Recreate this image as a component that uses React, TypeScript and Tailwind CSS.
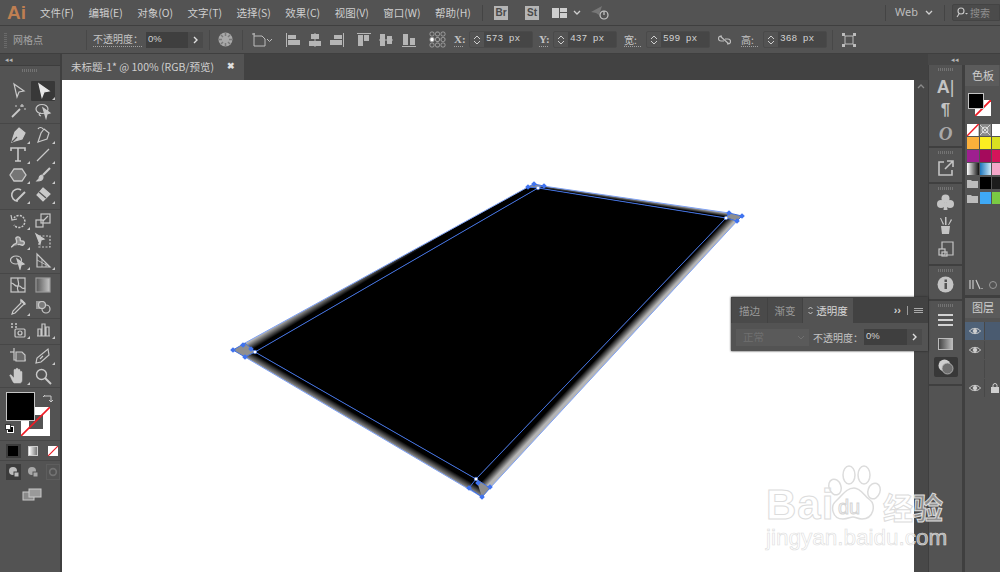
import React from "react";

const Grip = ({ w = "w-[16px]" }: { w?: string }) => (
  <div className={`${w} h-[3px] mx-auto bg-[repeating-linear-gradient(90deg,#737373_0_1px,transparent_1px_2px)]`} />
);

const Svg = ({ s = 18, children, c = "" }: { s?: number; children: React.ReactNode; c?: string }) => (
  <svg width={s} height={s} viewBox="0 0 18 18" fill="none" stroke="#c9c9c9" strokeWidth="1.2" className={`shrink-0 ${c}`}>
    {children}
  </svg>
);

const F = "#c9c9c9";

const Tool = ({ corner, active, children }: { corner?: boolean; active?: boolean; children: React.ReactNode }) => (
  <div className={`relative w-[24px] h-[20px] flex items-center justify-center rounded-[1px] ${active ? "bg-[#383838]" : ""}`}>
    {children}
    {corner && <span className="absolute right-[0px] bottom-[1px] w-0 h-0 border-l-[3px] border-l-transparent border-b-[3px] border-b-[#c9c9c9]" />}
  </div>
);

const toolGroups: { h: string; row: string; rows: [React.ReactNode, React.ReactNode, boolean?, boolean?][] }[] = [
  {
    h: "h-[44px]",
    row: "h-[20px]",
    rows: [
      [<path d="M5 2l10 7-5 1-2 5z" />, <path d="M5 2l10 7-5 1-2 5z" fill="#e8e8e8" stroke="#e8e8e8" />, false, true],
      [<><path d="M3 15L11 7" strokeWidth="1.8" /><path d="M13 2v3M11 4h4M15 7h2M6 4h2" /></>, <><ellipse cx="8" cy="7" rx="6" ry="4.5" /><path d="M7 14c-3-1-2-3 0-3" /><path d="M9 6l7 5-3 1-1 4z" fill={F} /></>, false, false],
    ],
  },
  {
    h: "h-[86px]",
    row: "h-[20px]",
    rows: [
      [<><path d="M10 2l6 5-3 6-7 2-3 1 1-4 2-6z" fill={F} /><path d="M3 16l5-5" stroke="#535353" /></>, <><path d="M10 3l5 4-2 6-6 2-3 1 1-3 2-6z" /><path d="M9 3C8 1 5 1 4 3" /></>, true, true],
      [<path d="M2 5V2h14v3M9 2v13M6 15h6" strokeWidth="1.6" />, <path d="M3 15L15 3" />, true, true],
      [<path d="M5 3h8l4 6-4 6H5L1 9z" fill="#757575" strokeWidth="1.3" />, <><path d="M16 2L9 9" strokeWidth="2.2" /><path d="M8 9c-2 0-3 2-3 4l-2 2c3 0 6-1 6-4z" fill={F} /></>, true, true],
      [<><path d="M12 4A6 6 0 1 0 9 15" strokeWidth="1.6" /><path d="M7 15L16 6" strokeWidth="2" /></>, <><path d="M9 2l7 6-7 7-6-6z" fill={F} /><path d="M5 6l7 6" stroke="#535353" /></>, true, true],
    ],
  },
  {
    h: "h-[64px]",
    row: "h-[20px]",
    rows: [
      [<><path d="M5 6a6 6 0 1 1 0 7" strokeDasharray="2 1.2" strokeWidth="1.5" /><path d="M2 3l1 5 5-1" /></>, <><rect x="7" y="2" width="9" height="9" /><rect x="2" y="8" width="7" height="7" /><path d="M9 9l5-5" /></>, true, false],
      [<path d="M2 15c2 0 2-3 4-3s2-3 1-5 3-3 4-1-1 3 2 3 3 3 1 4-4-2-5 0" fill="#8c8c8c" strokeWidth="1.4" />, <><rect x="5" y="4" width="11" height="11" strokeDasharray="2 1.5" /><path d="M2 2l8 5-3 1-1 4z" fill={F} /></>, true, false],
      [<><ellipse cx="7" cy="8" rx="5.5" ry="4" /><path d="M8 7l7 5-3 1-1 4z" fill={F} /></>, <><path d="M3 2v13h13L3 2z" /><path d="M3 8l13 7M8 7v8M12 11v4" strokeWidth=".8" /></>, true, true],
    ],
  },
  {
    h: "h-[45px]",
    row: "h-[22px]",
    rows: [
      [<><rect x="2" y="2" width="14" height="14" /><path d="M2 7c4 0 3 4 7 3s3 4 7 2M9 2c-1 3 2 4 0 8s1 4 0 6" /></>, <rect x="2" y="2" width="14" height="14" fill="url(#grd)" stroke="#9a9a9a" />],
      [<><path d="M12 2l4 4-2 1-8 8-3 1 1-3 8-8z" /><path d="M12 2l4 4" strokeWidth="2.2" /></>, <><rect x="2" y="3" width="8" height="8" fill="#9a9a9a" stroke="none" /><circle cx="12" cy="11" r="4" /><circle cx="8" cy="7" r="3.5" fill="#7a7a7a" /></>, true, false],
    ],
  },
  {
    h: "h-[26px]",
    row: "h-[20px]",
    rows: [
      [<><path d="M2 3h2M2 6h2M6 3h2M6 6h2" strokeWidth="1.6" /><rect x="6" y="8" width="10" height="8" rx="1" /><circle cx="11" cy="12" r="2" /></>, <path d="M3 15h13M4 15V8h3v7M8 15V3h3v12M12 15V6h3v9" strokeWidth="1.2" />, true, true],
    ],
  },
  {
    h: "h-[43px]",
    row: "h-[20px]",
    rows: [
      [<><path d="M5 1v12h12" /><path d="M1 5h4" /><path d="M7 5h6l3 3v6H7z" fill="#6a6a6a" /></>, <><path d="M14 2l1 6-8 7-5 1 1-5z" /><path d="M6 12l3-3" /></>, false, true],
      [<path d="M5 16c-2-2-3-6-4-7s1-2 2 0l2 2V3c0-1 2-1 2 0v5V2c0-1 2-1 2 0v6V3c0-1 2-1 2 0v6-4c0-1 2-1 2 0v8c0 2-1 3-2 3z" fill={F} strokeWidth=".5" />, <><circle cx="7.5" cy="7.5" r="5" strokeWidth="1.4" /><path d="M11 11l6 6" strokeWidth="2" /></>, true, false],
    ],
  },
];

const Swatch = ({ c }: { c: string }) => <div className={`h-full ${c}`} />;

const NoneBox = ({ c = "" }: { c?: string }) => (
  <svg viewBox="0 0 12 12" className={c} preserveAspectRatio="none">
    <rect width="12" height="12" fill="#fff" />
    <path d="M0 12L12 0" stroke="#ee1c25" strokeWidth="1.4" />
  </svg>
);

const LeftPanel = () => (
  <div className="w-[62px] h-full shrink-0 flex flex-col bg-[#3f3f3f] pr-[2px]">
    <div className="h-[11px] text-[7px] leading-[10px] pl-[5px] text-[#b5b5b5] bg-[#484848]">◂◂</div>
    <div className="flex-1 flex flex-col bg-[#535353] border-t border-[#3d3d3d] pt-[3px] relative">
      <Grip />
      <div className="h-[8px]" />
      {toolGroups.map((g, i) => (
        <div key={i} className={`${g.h} flex flex-col pl-[6px] pr-[5px] border-b border-[#474747] pt-[1px]`}>
          {g.rows.map((r, j) => (
            <div key={j} className={`flex justify-between ${g.row} shrink-0`}>
              <Tool corner={r[2]}><Svg s={18}>{r[0]}</Svg></Tool>
              <Tool corner={r[3]} active={i === 0 && j === 0}><Svg s={18}>{r[1]}</Svg></Tool>
            </div>
          ))}
        </div>
      ))}
      <div className="relative h-[53px] shrink-0 border-b border-[#474747]">
        <div className="absolute left-[21px] top-[19px] w-[29px] h-[29px] bg-white flex items-center justify-center">
          <div className="w-[14px] h-[14px] bg-[#535353]" />
          <svg className="absolute inset-0" viewBox="0 0 29 29"><path d="M0 29L29 0" stroke="#ee1c25" strokeWidth="1.6" /></svg>
        </div>
        <div className="absolute left-[6px] top-[4px] w-[29px] h-[29px] bg-black border border-[#c4c4c4]" />
        <svg className="absolute left-[42px] top-[4px]" width="12" height="12" viewBox="0 0 12 12" fill="none" stroke="#c9c9c9"><path d="M2 4h7v6M1 5l2-2M9 10l2-2M7 8l2 2" /></svg>
        <div className="absolute left-[7px] top-[38px] w-[7px] h-[7px] bg-black border border-white" />
        <div className="absolute left-[5px] top-[36px] w-[6px] h-[6px] bg-white border border-[#333]" />
      </div>
      <div className="h-[20px] flex items-center gap-[4px] pl-[6px] pt-[1px] border-b border-[#474747] shrink-0">
        <div className="w-[15px] h-[14px] bg-[#3c3c3c] flex items-center justify-center"><div className="w-[10px] h-[10px] bg-black" /></div>
        <div className="w-[14px] h-[14px] flex items-center justify-center ml-[2px]"><div className="w-[10px] h-[10px] border border-[#ccc] bg-[linear-gradient(90deg,#fff,#777)]" /></div>
        <div className="w-[14px] h-[14px] flex items-center justify-center ml-[2px]"><NoneBox c="w-[10px] h-[10px] block" /></div>
      </div>
      <div className="h-[22px] flex items-center gap-[6px] pl-[6px] shrink-0">
        <div className="w-[15px] h-[16px] bg-[#3c3c3c] flex items-center justify-center">
          <svg width="12" height="12" viewBox="0 0 12 12" fill="#bdbdbd"><circle cx="5" cy="5" r="4" /><rect x="6" y="6" width="5" height="5" stroke="#3c3c3c" /></svg>
        </div>
        <svg width="12" height="12" viewBox="0 0 12 12" fill="#a8a8a8"><circle cx="5" cy="5" r="4" /><rect x="6" y="6" width="5" height="5" stroke="#535353" /></svg>
        <div className="w-[14px] h-[16px] border border-[#5d5d5d] flex items-center justify-center ml-[1px]">
          <svg width="10" height="10" viewBox="0 0 12 12" fill="none" stroke="#727272" strokeWidth="2"><circle cx="6" cy="6" r="4" /></svg>
        </div>
      </div>
      <div className="flex justify-center pl-[3px] pt-[5px]">
        <svg width="20" height="13" viewBox="0 0 20 13" fill="#8a8a8a" stroke="#c9c9c9" strokeWidth="1"><rect x="1" y="4" width="11" height="8" /><rect x="7" y="1" width="12" height="8" fill="#9a9a9a" /></svg>
      </div>
    </div>
  </div>
);

const Artwork = () => (
  <svg className="absolute left-0 top-0" width="852" height="492" viewBox="62 80 852 492" fill="none">
    <defs>
      <linearGradient id="g1" gradientUnits="userSpaceOnUse" x1="255" y1="352" x2="249" y2="342"><stop offset=".3" stopColor="#000" /><stop offset="1" stopColor="#b5b5b5" /></linearGradient>
      <linearGradient id="g2" gradientUnits="userSpaceOnUse" x1="632" y1="203" x2="632.7" y2="198.5"><stop offset=".2" stopColor="#000" /><stop offset="1" stopColor="#aaa" /></linearGradient>
      <linearGradient id="g3" gradientUnits="userSpaceOnUse" x1="600" y1="350" x2="607.5" y2="357"><stop offset=".3" stopColor="#000" /><stop offset="1" stopColor="#b5b5b5" /></linearGradient>
      <linearGradient id="g4" gradientUnits="userSpaceOnUse" x1="365" y1="415" x2="358.5" y2="426"><stop offset=".3" stopColor="#000" /><stop offset="1" stopColor="#b5b5b5" /></linearGradient>
    </defs>
    <polygon points="233,350 245,343 255,352 245,357" fill="#8f8f8f" />
    <polygon points="528,187 534,184 544,186 538,188" fill="#8f8f8f" />
    <polygon points="729,213 742,216 737,221 726,218" fill="#8f8f8f" />
    <polygon points="476,479 490,488 482,497 469,488" fill="#8f8f8f" />
    <polygon points="245,343 528,187 538,188 255,352" fill="url(#g1)" />
    <polygon points="543,186 729,213 726,218 538,188" fill="url(#g2)" />
    <polygon points="738,220 490,488 476,479 726,218" fill="url(#g3)" />
    <polygon points="482,497 245,357 255,352 476,479" fill="url(#g4)" />
    <polygon points="255,352 538,188 726,218 476,479" fill="#000" />
    <g stroke="#3f6fe0" strokeWidth="1">
      <polygon points="255,352 538,188 726,218 476,479" />
      <path d="M245,343 L528,187 M543,186 L729,213 M738,220 L490,488 M482,497 L245,357" stroke="#7fa2f5" />
      <path d="M233,350 L245,343 L255,352 L245,357Z M528,187 L534,184 L544,186 L538,188Z M729,213 L742,216 L737,221 L726,218Z M476,479 L490,488 L482,497 L469,488Z" />
    </g>
    <g fill="#3f73f0">
      {[[233,350],[243,345],[245,357],[251,349],[528,187],[534,184],[544,186],[729,213],[742,216],[737,221],[469,488],[490,487],[482,497],[478,483]].map(([x, y], i) => (
        <rect key={i} x={x - 2} y={y - 2} width="4" height="4" transform={`rotate(45 ${x} ${y})`} />
      ))}
    </g>
    <g fill="#fff" stroke="#3f73f0" strokeWidth=".5">
      <circle cx="255" cy="352" r="1.8" /><circle cx="538" cy="188" r="1.8" /><circle cx="726" cy="218" r="1.8" /><circle cx="476" cy="479" r="1.8" />
    </g>
  </svg>
);

const menus = ["文件(F)", "编辑(E)", "对象(O)", "文字(T)", "选择(S)", "效果(C)", "视图(V)", "窗口(W)", "帮助(H)"];

const Menu = () => (
  <div className="h-[26px] shrink-0 bg-[#535353] border-b border-[#3f3f3f] flex items-center text-[#cfcfcf] text-[10.5px]">
    <span className="w-[40px] pl-[7px] text-[19px] leading-[20px] font-['Liberation_Sans'] font-bold text-[#bf7f52]">Ai</span>
    <div className="flex gap-[14.5px] w-[442px]">
      {menus.map((m) => <span key={m} className="whitespace-nowrap">{m}</span>)}
    </div>
    <div className="w-px h-[16px] bg-[#444]" />
    <div className="ml-[11px] w-[14px] h-[14px] bg-[#b5b5b5] text-[#4a4a4a] text-[10px] font-bold flex items-center justify-center font-['Liberation_Sans']">Br</div>
    <div className="ml-[17px] w-[14px] h-[14px] bg-[#b5b5b5] text-[#4a4a4a] text-[10px] font-bold flex items-center justify-center font-['Liberation_Sans']">St</div>
    <svg className="ml-[13px]" width="15" height="10" viewBox="0 0 15 10" fill="#cfcfcf"><rect width="7" height="10" /><rect x="8" width="7" height="4" /><rect x="8" y="5" width="7" height="5" /></svg>
    <svg className="ml-[6px]" width="8" height="6" viewBox="0 0 8 6" fill="none" stroke="#cfcfcf" strokeWidth="1.3"><path d="M1 1l3 3 3-3" /></svg>
    <svg className="ml-[9px]" width="20" height="15" viewBox="0 0 20 15" fill="none">
      <path d="M1 7L12 1 9 10 6 8z" fill="#777" />
      <circle cx="14" cy="10" r="4" stroke="#c9c9c9" strokeWidth="1.2" />
      <path d="M14 6v4" stroke="#c9c9c9" strokeWidth="1.2" />
    </svg>
    <div className="flex-1" />
    <div className="w-px h-[16px] bg-[#444]" />
    <span className="ml-[9px] text-[11px] text-[#bdbdbd] font-['Noto_Sans']">Web</span>
    <svg className="ml-[7px]" width="8" height="6" viewBox="0 0 8 6" fill="none" stroke="#cfcfcf" strokeWidth="1.3"><path d="M1 1l3 3 3-3" /></svg>
    <div className="w-px h-[16px] bg-[#444] ml-[11px]" />
    <div className="ml-[7px] w-[48px] h-[17px] bg-[#4b4b4b] border border-[#444] flex items-center pl-[3px] gap-[2px] text-[#8f8f8f] text-[10px] whitespace-nowrap rounded-l-[2px]">
      <svg width="12" height="11" viewBox="0 0 12 11" fill="none" stroke="#c9c9c9" strokeWidth="1.1"><circle cx="5" cy="4" r="3" /><path d="M3 7L1 10" /><path d="M9 6h3l-1.5 1.5z" fill="#c9c9c9" stroke="none" /></svg>
      搜索
    </div>
  </div>
);

const Div = ({ ml }: { ml: string }) => <div className={`${ml} w-px h-[20px] bg-[#484848] shrink-0`} />;

const Align = ({ ml, d }: { ml: string; d: React.ReactNode }) => (
  <svg className={`${ml} shrink-0`} width="14" height="14" viewBox="0 0 14 14" fill="#b5b5b5" stroke="none">{d}</svg>
);

const Field = ({ label, value, ml, boxMl, w, serif }: { label: string; value: string; ml: string; boxMl: string; w: string; serif?: boolean }) => (
  <>
    <span className={`${ml} ${w} ${serif ? "font-['Liberation_Serif'] font-bold text-[11px]" : "text-[10px]"} text-[#c4c4c4] border-b border-dotted border-[#a0a0a0] leading-[13px] whitespace-nowrap shrink-0`}>{label}</span>
    <div className={`${boxMl} w-[64px] h-[17px] rounded-[2px] border border-[#4a4a4a] flex shrink-0`}>
      <div className="w-[14px] flex flex-col items-center justify-center gap-[2px]">
        <svg width="8" height="4" viewBox="0 0 8 4" fill="none" stroke="#cfcfcf"><path d="M1 4l3-3 3 3" /></svg>
        <svg width="8" height="4" viewBox="0 0 8 4" fill="none" stroke="#cfcfcf"><path d="M1 0l3 3 3-3" /></svg>
      </div>
      <div className="flex-1 bg-[#464646] pl-[2px] text-[9.5px] leading-[13px] text-[#d2d2d2] font-['Liberation_Mono'] whitespace-nowrap">{value}</div>
    </div>
  </>
);

const Options = () => (
  <div className="h-[28px] shrink-0 bg-[#535353] border-b border-[#3f3f3f] flex items-center text-[#c4c4c4]">
    <div className="ml-[4px] w-[3px] h-[16px] bg-[repeating-linear-gradient(0deg,#6a6a6a_0_1px,transparent_1px_2px)] shrink-0" />
    <span className="ml-[6px] w-[30px] text-[10px] text-[#a3a3a3] whitespace-nowrap shrink-0">网格点</span>
    <Div ml="ml-[43px]" />
    <span className="ml-[6px] w-[49px] text-[10px] leading-[14px] border-b border-dotted border-[#a0a0a0] whitespace-nowrap shrink-0 overflow-hidden">不透明度：</span>
    <div className="ml-[4px] w-[42px] h-[16px] bg-[#3f3f3f] text-[9.5px] leading-[13px] pl-[2px] text-[#d2d2d2] shrink-0 font-['Liberation_Sans']">0%</div>
    <div className="w-[15px] h-[16px] bg-[#4b4b4b] flex items-center justify-center shrink-0">
      <svg width="5" height="8" viewBox="0 0 5 8" fill="none" stroke="#e0e0e0" strokeWidth="1.4"><path d="M1 1l3 3-3 3" /></svg>
    </div>
    <Div ml="ml-[6px]" />
    <svg className="ml-[8px] shrink-0" width="15" height="15" viewBox="0 0 15 15"><circle cx="7.5" cy="7.5" r="7" fill="#a8a8a8" /><g stroke="#7a7a7a" strokeWidth="1.5"><path d="M7.5 1v3M7.5 11v3M1 7.5h3M11 7.5h3M3 3l2 2M10 10l2 2M12 3l-2 2M5 10l-2 2" /></g></svg>
    <Div ml="ml-[9px]" />
    <svg className="ml-[9px] shrink-0" width="21" height="14" viewBox="0 0 21 14" fill="none" stroke="#bdbdbd"><path d="M2 3h8l3 3v7H2z" /><path d="M0 1h3M2 0v3" /><path d="M15 6l2.5 2.5L20 6" /></svg>
    <Align ml="ml-[13px]" d={<><rect x="0" width="1" height="14" /><rect x="2" y="2" width="8" height="4" /><rect x="2" y="7" width="12" height="5" /></>} />
    <Align ml="ml-[8px]" d={<><rect x="6.5" width="1" height="14" /><rect x="3" y="1" width="8" height="5" /><rect x="1" y="8" width="12" height="5" /></>} />
    <Align ml="ml-[8px]" d={<><rect x="13" width="1" height="14" /><rect x="4" y="2" width="8" height="4" /><rect x="0" y="7" width="12" height="5" /></>} />
    <Align ml="ml-[13px]" d={<><rect x="0" width="14" height="1" /><rect x="1" y="2" width="5" height="11" /><rect x="7" y="2" width="5" height="6" /></>} />
    <Align ml="ml-[8px]" d={<><rect y="6.5" width="14" height="1" /><rect x="1" y="1" width="5" height="12" /><rect x="8" y="3" width="5" height="8" /></>} />
    <Align ml="ml-[9px]" d={<><rect y="13" width="14" height="1" /><rect x="1" y="1" width="5" height="11" /><rect x="8" y="5" width="5" height="7" /></>} />
    <svg className="ml-[13px] shrink-0" width="17" height="17" viewBox="0 0 17 17" fill="none" stroke="#a8a8a8" strokeWidth=".9">
      {[1, 6.5, 12].map((y) => [1, 6.5, 12].map((x) => <rect key={`${x}${y}`} x={x} y={y} width="4" height="4" rx="1.5" fill={x === 1 && y === 6.5 ? "#fff" : "none"} />))}
    </svg>
    <Field label="X:" value="573 px" ml="ml-[8px]" boxMl="ml-[6px]" w="w-[9px]" serif />
    <Field label="Y:" value="437 px" ml="ml-[6px]" boxMl="ml-[5px]" w="w-[9px]" serif />
    <Field label="宽:" value="599 px" ml="ml-[7px]" boxMl="ml-[5px]" w="w-[17px]" />
    <svg className="ml-[8px] shrink-0" width="13" height="10" viewBox="0 0 13 10" fill="none" stroke="#bdbdbd" strokeWidth="1.2"><path d="M4 1H3a2.5 2.5 0 0 0 0 5h3M9 9h1a2.5 2.5 0 0 0 0-5H7M2 1l9 8" /></svg>
    <Field label="高:" value="368 px" ml="ml-[10px]" boxMl="ml-[5px]" w="w-[17px]" />
    <Div ml="ml-[5px]" />
    <svg className="ml-[9px] shrink-0" width="14" height="14" viewBox="0 0 14 14" fill="#bdbdbd"><path d="M3 3h8v8H3z" fill="none" stroke="#bdbdbd" /><rect width="3" height="3" /><rect x="11" width="3" height="3" /><rect y="11" width="3" height="3" /><rect x="11" y="11" width="3" height="3" /></svg>
  </div>
);

const DockGroup = ({ h, children }: { h: string; children: React.ReactNode }) => (
  <div className={`${h} shrink-0 bg-[#535353] flex flex-col items-center pt-[3px] mb-[2px]`}>
    <Grip />
    {children}
  </div>
);

const Dock = () => (
  <div className="w-[36px] shrink-0 h-full flex flex-col bg-[#3f3f3f] pl-[1px] pr-[2px]">
    <div className="h-[11px] text-[7px] leading-[10px] text-right pr-[5px] text-[#b5b5b5] bg-[#484848] -mr-[2px] -ml-[1px]">◂◂</div>
    <DockGroup h="h-[81px]">
      <span className="mt-[5px] h-[23px] text-[18px] leading-[22px] text-[#c4c4c4] font-['Liberation_Sans'] font-bold">A<span className="font-normal">|</span></span>
      <span className="h-[24px] text-[17px] leading-[24px] text-[#c4c4c4] font-['Liberation_Sans'] font-bold">¶</span>
      <span className="h-[24px] text-[19px] leading-[24px] text-[#a9a9a9] font-['Liberation_Serif'] font-bold italic">O</span>
    </DockGroup>
    <DockGroup h="h-[34px]">
      <svg className="mt-[5px]" width="18" height="18" viewBox="0 0 18 18" fill="none" stroke="#c4c4c4" strokeWidth="1.6"><path d="M7 3H2v13h13v-5M8 10l8-8M10 2h6v6" /></svg>
    </DockGroup>
    <DockGroup h="h-[80px]">
      <svg className="mt-[4px]" width="17" height="17" viewBox="0 0 17 17" fill="#c4c4c4"><circle cx="8.5" cy="4.5" r="4" /><circle cx="4" cy="10" r="4" /><circle cx="13" cy="10" r="4" /><path d="M7.5 8h2l1 8h-4z" /></svg>
      <svg className="mt-[6px]" width="17" height="17" viewBox="0 0 17 17" fill="#c4c4c4"><path d="M4 9h9l-1 8H5z" /><path d="M6 8L3 1l1 0 3 6zM8 8V0h1.5v8zM11 8l3-6 1 1-3 5z" /></svg>
      <svg className="mt-[7px]" width="16" height="16" viewBox="0 0 16 16" fill="none" stroke="#c4c4c4" strokeWidth="1.2"><path d="M4 8V1h11v13H8" /><rect x="1" y="8" width="6" height="6" /><rect x="4" y="11" width="5" height="4" /></svg>
    </DockGroup>
    <DockGroup h="h-[33px]">
      <svg className="mt-[4px]" width="17" height="17" viewBox="0 0 17 17"><circle cx="8.5" cy="8.5" r="8" fill="#c4c4c4" /><rect x="7.5" y="7" width="2.5" height="6" fill="#535353" /><rect x="7.5" y="3.5" width="2.5" height="2.5" fill="#535353" /></svg>
    </DockGroup>
    <DockGroup h="h-[83px]">
      <div className="mt-[7px] w-[15px] flex flex-col gap-[3px]"><div className="h-[2px] bg-[#d2d2d2]" /><div className="h-[2px] bg-[#d2d2d2]" /><div className="h-[2px] bg-[#d2d2d2]" /></div>
      <div className="mt-[12px] w-[15px] h-[12px] border border-[#bbb] bg-[linear-gradient(90deg,#444,#bbb)]" />
      <div className="mt-[7px] w-[24px] h-[20px] bg-[#383838] rounded-[2px] flex items-center justify-center">
        <svg width="16" height="16" viewBox="0 0 16 16"><circle cx="6.5" cy="6.5" r="6" fill="#cfcfcf" /><circle cx="9.5" cy="9.5" r="5.5" fill="#707070" stroke="#bbb" strokeWidth=".8" /></svg>
      </div>
    </DockGroup>
    <div className="flex-1 bg-[#535353]" />
  </div>
);

const swatchRows: string[][] = [
  ["none", "pattern", "bg-white"],
  ["bg-[#fbb03b]", "bg-[#fcee21]", "bg-[#d9e021]"],
  ["bg-[#9e1f8f]", "bg-[#a50a5c]", "bg-[#d4145a]"],
  ["bg-[linear-gradient(90deg,#fff,#111)]", "bg-[linear-gradient(90deg,#1c75bc,#cfe9f7)]", "bg-[#f4a6c8]"],
  ["folder", "bg-black", "bg-[#1c1c1c]"],
  ["folder", "bg-[#3fa9f5]", "bg-[#7ac943]"],
];

const EyeIcon = () => (
  <svg width="12" height="8" viewBox="0 0 12 8" fill="none" stroke="#d0d0d0"><path d="M.5 4C3 .5 9 .5 11.5 4 9 7.5 3 7.5.5 4z" /><circle cx="6" cy="4" r="1.8" fill="#d0d0d0" /></svg>
);

const LayerRow = ({ eye, lock, active }: { eye?: boolean; lock?: boolean; active?: boolean }) => (
  <div className={`h-[18px] mb-px flex shrink-0 ${active ? "bg-[#4a5b70]" : "bg-[#535353]"}`}>
    <div className={`w-[20px] flex items-center justify-center border-r border-[#484848] ${active ? "bg-[#4f6278]" : ""}`}>{eye && <EyeIcon />}</div>
    <div className="flex-1 flex items-center pl-[6px]">
      {lock && <svg width="8" height="10" viewBox="0 0 8 10" fill="#d0d0d0"><rect y="4" width="8" height="6" /><path d="M2 4V2.5a2 2 0 0 1 4 0V4" fill="none" stroke="#d0d0d0" /></svg>}
    </div>
  </div>
);

const RightPanel = () => (
  <div className="flex-1 h-full flex flex-col bg-[#3f3f3f] pl-[1px] min-w-0">
    <div className="h-[11px] bg-[#484848] -ml-px" />
    <div className="h-[230px] bg-[#535353] flex flex-col shrink-0 relative">
      <div className="h-[21px] pl-[7px] text-[11px] leading-[21px] text-[#cfcfcf] w-[34px] bg-[#5b5b5b] whitespace-nowrap shrink-0">色板</div>
      <div className="h-[38px] relative shrink-0">
        <div className="absolute left-[10px] top-[14px] w-[16px] h-[16px] bg-white flex"><NoneBox c="w-full h-full" /></div>
        <div className="absolute left-[3px] top-[7px] w-[16px] h-[16px] bg-black border border-[#c4c4c4]" />
      </div>
      <div className="flex flex-col gap-px pl-[2px] w-[36px]">
        {swatchRows.map((r, i) => (
          <div key={i} className={`grid grid-cols-3 gap-px h-[12px] w-[37px] ${i === 4 ? "mt-[1px]" : ""} ${i === 5 ? "mt-[2px]" : ""}`}>
            {r.map((c, j) =>
              c === "none" ? <NoneBox key={j} c="w-full h-full block" /> :
              c === "pattern" ? <div key={j} className="h-full bg-[#8a8a8a] flex items-center justify-center"><svg width="10" height="10" viewBox="0 0 10 10" fill="none" stroke="#d8d8d8"><circle cx="5" cy="5" r="3" /><path d="M0 0l10 10M10 0L0 10" /></svg></div> :
              c === "folder" ? <div key={j} className="h-full flex items-end justify-center pb-[1px]"><svg width="11" height="9" viewBox="0 0 11 9" fill="#bcbcbc"><path d="M0 1h4l1 1h6v7H0z" /></svg></div> :
              <Swatch key={j} c={c} />
            )}
          </div>
        ))}
      </div>
      <div className="absolute left-[4px] top-[225px] -translate-y-full flex items-center text-[#c9c9c9]">
        <svg width="14" height="11" viewBox="0 0 14 11" fill="none" stroke="#c9c9c9" strokeWidth="1.2"><path d="M1 1v9M4 1v9M7 1l4 9M13 9v1" /></svg>
        <svg className="ml-[5px]" width="10" height="10" viewBox="0 0 10 10" fill="none" stroke="#999"><circle cx="5" cy="5" r="3.5" /></svg>
      </div>
    </div>
    <div className="flex-1 bg-[#535353] mt-[3px] flex flex-col">
      <div className="h-[20px] w-[36px] pl-[7px] text-[11px] leading-[18px] text-[#cfcfcf] bg-[#5b5b5b] whitespace-nowrap shrink-0">图层</div>
      <div className="h-[4px]" />
      <LayerRow eye active />
      <LayerRow eye />
      <LayerRow />
      <LayerRow eye lock />
    </div>
  </div>
);

const FloatingPanel = () => (
  <div className="absolute left-[731px] top-[297px] w-[197px] h-[54px] bg-[#535353] shadow-[0_0_2px_#222] flex flex-col text-[10.5px]">
    <div className="h-[26px] shrink-0 bg-[#424242] flex items-stretch pt-[1px] text-[#999]">
      <div className="w-[35px] ml-[1px] bg-[#4a4a4a] flex items-center justify-center">描边</div>
      <div className="w-[34px] ml-[1px] bg-[#4a4a4a] flex items-center justify-center">渐变</div>
      <div className="w-[50px] ml-[1px] bg-[#535353] flex items-center justify-center gap-[3px] text-[#d6d6d6]">
        <svg width="5" height="9" viewBox="0 0 5 9" fill="none" stroke="#c9c9c9"><path d="M.5 3L2.5 1l2 2M.5 6l2 2 2-2" /></svg>
        透明度
      </div>
      <div className="flex-1 flex items-center justify-end pr-[5px] gap-[4px]">
        <span className="text-[#d0d0d0] text-[11px] leading-none font-['Liberation_Sans'] font-bold">››</span>
        <div className="w-px h-[9px] bg-[#9a9a9a] ml-[2px]" />
        <div className="w-[9px] ml-[2px] flex flex-col gap-px"><div className="h-px bg-[#aaa]" /><div className="h-px bg-[#aaa]" /><div className="h-px bg-[#aaa]" /></div>
      </div>
    </div>
    <div className="flex items-center h-[28px] pl-[5px]">
      <div className="w-[73px] h-[17px] bg-[#5a5a5a] flex items-center justify-between pl-[7px] pr-[4px] text-[#707070] shrink-0">
        正常
        <svg width="8" height="5" viewBox="0 0 8 5" fill="none" stroke="#707070"><path d="M1 1l3 3 3-3" /></svg>
      </div>
      <span className="ml-[4px] w-[51px] text-[#c4c4c4] text-[10px] whitespace-nowrap shrink-0">不透明度：</span>
      <div className="w-[43px] h-[16px] bg-[#3f3f3f] text-[9.5px] leading-[13px] pl-[2px] text-[#d2d2d2] font-['Liberation_Sans'] shrink-0">0%</div>
      <div className="w-[15px] h-[16px] bg-[#4b4b4b] flex items-center justify-center shrink-0">
        <svg width="5" height="8" viewBox="0 0 5 8" fill="none" stroke="#e0e0e0" strokeWidth="1.4"><path d="M1 1l3 3-3 3" /></svg>
      </div>
    </div>
  </div>
);

const Watermark = () => (
  <div className="absolute left-0 top-0 w-[1000px] h-[572px] pointer-events-none overflow-hidden">
    <svg className="absolute left-[825px] top-[463px]" width="60" height="60" viewBox="0 0 60 60" fill="#fff" fillOpacity=".25" stroke="#dcdcdc" strokeWidth="1.5">
      <ellipse cx="10" cy="24" rx="6" ry="8" transform="rotate(-20 10 24)" />
      <ellipse cx="24" cy="12" rx="6" ry="9" />
      <ellipse cx="39" cy="12" rx="6" ry="9" />
      <ellipse cx="49" cy="28" rx="6" ry="8" transform="rotate(20 49 28)" />
      <path d="M29 25c7 0 10 8 16 12s4 19-8 19c-5 0-6-2-9-2s-5 2-10 2c-11 0-13-13-7-18s10-13 18-13z" />
    </svg>
    <span className="absolute left-[766px] top-[483px] text-[42px] leading-[44px] font-bold font-['Liberation_Sans'] text-white/30 [-webkit-text-stroke:1px_#dcdcdc] tracking-[1px]">Bai</span>
    <span className="absolute left-[838px] top-[496px] text-[20px] leading-[22px] font-['Liberation_Sans'] text-white/30 [-webkit-text-stroke:1px_#d5d5d5]">du</span>
    <span className="absolute left-[883px] top-[488px] text-[30px] leading-[36px] font-bold text-white/40 [-webkit-text-stroke:1px_#dcdcdc] whitespace-nowrap">经验</span>
    <span className="absolute left-[766px] top-[524px] text-[22.5px] leading-[28px] font-['Liberation_Sans'] text-white/50 [-webkit-text-stroke:.6px_#dcdcdc] whitespace-nowrap">jingyan.baidu.com</span>
  </div>
);

export default function App() {
  return (
    <div className="relative w-[1000px] h-[572px] overflow-hidden flex flex-col bg-[#3f3f3f] font-['Noto_Sans_CJK_SC','Noto_Sans',sans-serif]">
      <svg width="0" height="0" className="absolute"><defs><linearGradient id="grd" x1="0" x2="1"><stop stopColor="#555" /><stop offset="1" stopColor="#c8c8c8" /></linearGradient></defs></svg>
      <Menu />
      <Options />
      <div className="flex-1 flex min-h-0">
        <LeftPanel />
        <div className="w-[866px] shrink-0 flex flex-col h-full">
          <div className="h-[26px] shrink-0 bg-[#424242] flex">
            <div className="w-[182px] bg-[#535353] flex items-center pl-[9px] text-[10.5px] text-[#cfcfcf] whitespace-nowrap">
              未标题-1* @ 100% (RGB/预览)
              <span className="ml-[13px] text-[9px] font-bold text-[#e0e0e0] font-['Liberation_Sans']">✖</span>
            </div>
          </div>
          <div className="flex-1 flex min-h-0">
            <div className="relative w-[852px] h-full bg-white shrink-0"><Artwork /></div>
            <div className="flex-1 bg-[#484848] flex justify-center pt-[4px]">
              <svg width="8" height="5" viewBox="0 0 8 5" fill="none" stroke="#8a8a8a" strokeWidth="1.3"><path d="M1 4l3-3 3 3" /></svg>
            </div>
          </div>
        </div>
        <Dock />
        <RightPanel />
      </div>
      <FloatingPanel />
      <Watermark />
    </div>
  );
}
